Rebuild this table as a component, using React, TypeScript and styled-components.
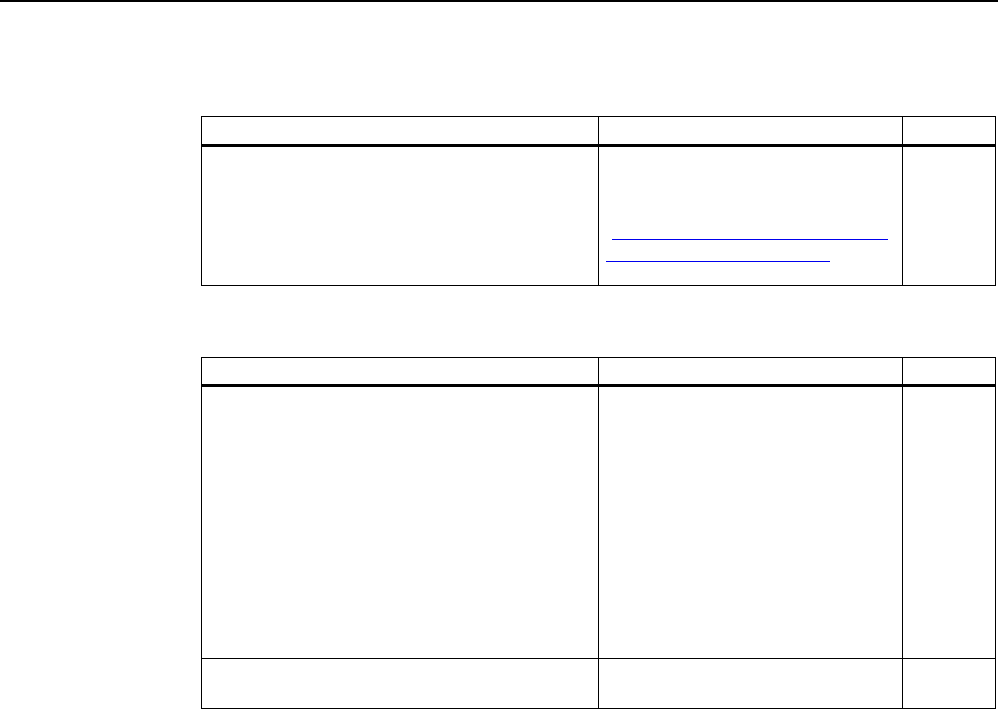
import { Fragment } from "react";
import { createGlobalStyle, styled } from "styled-components";

const GlobalStyle = createGlobalStyle`
  html, body {
    margin: 0;
    padding: 0;
    background: #ffffff;
    font-family: "Liberation Sans", Arial, sans-serif;
  }
`;

const Page = styled.div`
  display: flex;
  flex-direction: column;
  width: 998px;
  height: 710px;
  overflow: hidden;
`;

const TopRule = styled.div`
  width: 100%;
  height: 0;
  border-bottom: 2px solid #000000;
`;

const Content = styled.div`
  display: flex;
  flex-direction: column;
  gap: 71px;
  padding: 114px 0 0 201px;
`;

const Table = styled.div`
  display: grid;
  grid-template-columns: 397px 304px 93px;
  width: 795px;
  box-sizing: border-box;
  border-top: 1px solid #000000;
  border-left: 1px solid #000000;
`;

const Cell = styled.div<{ $h: number; $head?: boolean }>`
  box-sizing: content-box;
  height: ${(p) => p.$h}px;
  border-right: 1px solid #000000;
  border-bottom: ${(p) => (p.$head ? 3 : 1)}px solid #000000;
`;

const LinkCell = styled(Cell)`
  display: flex;
  flex-direction: column;
  justify-content: flex-end;
  align-items: flex-start;
  padding: 0 0 23px 7px;
  width: 296px;
  height: ${(p) => p.$h - 23}px;
`;

const Link = styled.a<{ $w: number; $indent?: number }>`
  display: block;
  height: 21px;
  width: ${(p) => p.$w}px;
  margin-left: ${(p) => p.$indent ?? 0}px;
  border-bottom: 1px solid #0000ee;
  color: #0000ee;
`;

type Row = { h: number; head?: boolean };

const Grid = ({ rows, linkRow }: { rows: Row[]; linkRow?: number }) => (
  <Table>
    {rows.map((r, i) => (
      <Fragment key={i}>
        <Cell $h={r.h} $head={r.head} />
        {linkRow === i ? (
          <LinkCell $h={r.h}>
            <Link href="#" $w={276} $indent={6} />
            <Link href="#" $w={224} />
          </LinkCell>
        ) : (
          <Cell $h={r.h} $head={r.head} />
        )}
        <Cell $h={r.h} $head={r.head} />
      </Fragment>
    ))}
  </Table>
);

export default function App() {
  return (
    <>
      <GlobalStyle />
      <Page>
        <TopRule />
        <Content>
          <Grid
            rows={[
              { h: 27, head: true },
              { h: 138 },
            ]}
            linkRow={1}
          />
          <Grid
            rows={[
              { h: 26, head: true },
              { h: 271 },
              { h: 49 },
            ]}
          />
        </Content>
      </Page>
    </>
  );
}
